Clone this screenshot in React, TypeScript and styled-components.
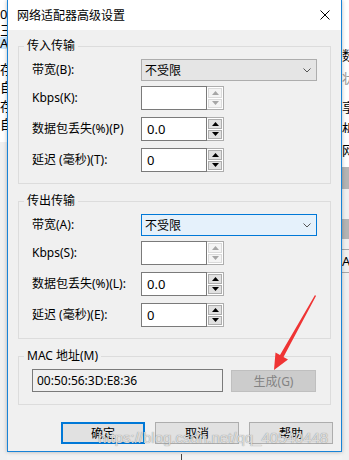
import React from 'react';
import styled, {createGlobalStyle} from 'styled-components';

const GlobalStyle = createGlobalStyle`
  html, body {
    margin: 0;
    padding: 0;
    background: #f0f0f0;
  }
  body {
    font-family: "Noto Sans", "Noto Sans CJK SC", sans-serif;
    font-size: 12px;
    color: #000;
  }
`;

const Screen = styled.div`
  display: flex;
  width: 349px;
  height: 460px;
  overflow: hidden;
`;

// strips of the window behind the dialog
const Backdrop = styled.div`
  width: 7px;
  flex: none;
  overflow: hidden;
  display: flex;
  flex-direction: column;
  background: #f0f0f0;
`;

const BackdropLine = styled.div<{$h: number; $bg?: string; $color?: string; $rule?: boolean}>`
  height: ${p => p.$h}px;
  flex: none;
  display: flex;
  align-items: center;
  background: ${p => p.$bg || 'transparent'};
  color: ${p => p.$color || '#000'};
  border-bottom: ${p => (p.$rule ? '1px solid #a8a8a8' : 'none')};
  font-size: 13px;
  line-height: 1;
  white-space: nowrap;
`;

const DialogColumn = styled.div`
  width: 335px;
  flex: none;
  display: flex;
  flex-direction: column;
`;

const Dialog = styled.div`
  position: relative;
  z-index: 1;
  height: 452px;
  flex: none;
  box-sizing: border-box;
  border: 1px solid #1883d7;
  border-top: none;
  background: #f0f0f0;
  display: flex;
  flex-direction: column;
  box-shadow: 0 0 4px rgba(0, 0, 0, 0.28);
`;

const TitleBar = styled.div`
  height: 30px;
  flex: none;
  background: #fff;
  display: flex;
  align-items: center;
  justify-content: space-between;
  padding: 0 11px 0 9px;
  font-size: 12px;
`;

const Body = styled.div`
  display: flex;
  flex-direction: column;
  gap: 9px;
  padding: 8px 10px 0 10px;
`;

const Group = styled.fieldset`
  margin: 0;
  padding: 0;
  min-width: 0;
  border: 1px solid #dcdcdc;
`;

const Legend = styled.legend`
  margin-left: 5px;
  padding: 0 3px;
  font-size: 12px;
  line-height: 16px;
`;

const GroupContent = styled.div<{$pb?: number}>`
  display: flex;
  flex-direction: column;
  gap: 7px;
  padding: 5px 13px ${p => p.$pb ?? 11}px 13px;
`;

const Row = styled.div<{$h: number; $tight?: boolean}>`
  display: grid;
  grid-template-columns: 109px auto;
  align-items: center;
  height: ${p => p.$h}px;
  margin-bottom: ${p => (p.$tight ? -2 : 0)}px;
`;

const Label = styled.div`
  white-space: nowrap;
  line-height: 16px;
`;

const Select = styled.div<{$focused?: boolean}>`
  width: 176px;
  height: 22px;
  box-sizing: border-box;
  border: 1px solid ${p => (p.$focused ? '#0078d7' : '#adadad')};
  background: ${p => (p.$focused ? '#e5f1fb' : '#e5e5e5')};
  display: flex;
  align-items: center;
  justify-content: space-between;
  padding: 0 5px 0 3px;
`;

const Spin = styled.div`
  display: flex;
  width: 83px;
  height: 24px;
`;

const SpinField = styled.div`
  width: 66px;
  box-sizing: border-box;
  border: 1px solid #7a7a7a;
  background: #fff;
  display: flex;
  align-items: center;
  padding-left: 5px;
  font-size: 13px;
`;

const SpinButtons = styled.div`
  width: 17px;
  box-sizing: border-box;
  border: 1px solid #adadad;
  border-left: none;
  background: #fff;
  display: flex;
  flex-direction: column;
  gap: 1px;
  padding: 1px;
`;

const SpinButton = styled.div<{$disabled?: boolean}>`
  flex: 1;
  box-sizing: border-box;
  border: 1px solid ${p => (p.$disabled ? '#dadada' : '#adadad')};
  background: ${p => (p.$disabled ? '#f4f4f4' : '#e1e1e1')};
  display: flex;
  align-items: center;
  justify-content: center;
`;

const MacRow = styled.div`
  display: flex;
  align-items: center;
  gap: 8px;
`;

const MacField = styled.div`
  width: 191px;
  height: 23px;
  box-sizing: border-box;
  border: 1px solid #7a7a7a;
  display: flex;
  align-items: center;
  padding-left: 4px;
  font-size: 12px;
`;

const Button = styled.div<{$primary?: boolean; $disabled?: boolean}>`
  width: ${p => (p.$disabled ? 85 : 84)}px;
  height: 22px;
  box-sizing: border-box;
  border: ${p => (p.$primary ? '2px solid #0078d7' : `1px solid ${p.$disabled ? '#bfbfbf' : '#adadad'}`)};
  background: ${p => (p.$disabled ? '#cccccc' : '#e1e1e1')};
  color: ${p => (p.$disabled ? '#838383' : '#000')};
  display: flex;
  align-items: center;
  justify-content: center;
  font-size: 12px;
`;

const Footer = styled.div`
  display: flex;
  justify-content: flex-end;
  gap: 10px;
  margin-top: 17px;
  padding-right: 8px;
`;

const Watermark = styled.div`
  position: absolute;
  left: 90px;
  top: 429px;
  font-family: "Liberation Sans", Arial, sans-serif;
  font-size: 15px;
  line-height: 18px;
  color: rgba(232, 232, 232, 0.9);
  text-shadow: 0 0 1px rgba(80, 80, 80, 0.75);
  white-space: nowrap;
  pointer-events: none;
`;

const Arrow = styled.svg`
  position: absolute;
  left: 261px;
  top: 292px;
`;

const BelowDialog = styled.div`
  flex: 1;
  background: #f2f2f2;
  padding: 2px 0 0 174px;
`;

const Tick = styled.div`
  width: 1px;
  height: 6px;
  background: #444;
`;

const Chevron = () => (
  <svg width="8" height="5" viewBox="0 0 8 5">
    <path d="M0.5 0.5 L4 4 L7.5 0.5" fill="none" stroke="#555" strokeWidth="1"/>
  </svg>
);

const SpinArrow = ({up, disabled}: {up?: boolean; disabled?: boolean}) => (
  <svg width="7" height="4" viewBox="0 0 7 4">
    <polygon points={up ? '0,4 3.5,0 7,4' : '0,0 7,0 3.5,4'} fill={disabled ? '#a6a6a6' : '#000'}/>
  </svg>
);

const SpinBox = ({value, disabled}: {value?: string; disabled?: boolean}) => (
  <Spin>
    <SpinField>{value}</SpinField>
    <SpinButtons>
      <SpinButton $disabled={disabled}><SpinArrow up disabled={disabled}/></SpinButton>
      <SpinButton $disabled={disabled}><SpinArrow disabled={disabled}/></SpinButton>
    </SpinButtons>
  </Spin>
);

type Transfer = {title: string; keys: string[]; focused?: boolean};

const transfers: Transfer[] = [
  {title: '传入传输', keys: ['B', 'K', 'P', 'T']},
  {title: '传出传输', keys: ['A', 'S', 'L', 'E'], focused: true},
];

const TransferGroup = ({title, keys, focused}: Transfer) => (
  <Group>
    <Legend>{title}</Legend>
    <GroupContent>
      <Row $h={22} $tight>
        <Label>带宽({keys[0]}):</Label>
        <Select $focused={focused}>不受限<Chevron/></Select>
      </Row>
      <Row $h={24}>
        <Label>Kbps({keys[1]}):</Label>
        <SpinBox disabled/>
      </Row>
      <Row $h={24}>
        <Label>数据包丢失(%)({keys[2]}){focused ? ':' : ''}</Label>
        <SpinBox value="0.0"/>
      </Row>
      <Row $h={24}>
        <Label>延迟 (毫秒)({keys[3]}):</Label>
        <SpinBox value="0"/>
      </Row>
    </GroupContent>
  </Group>
);

const App = () => (
  <>
    <GlobalStyle/>
    <Screen>
      <Backdrop>
        <BackdropLine $h={5} $bg="#fff"/>
        <BackdropLine $h={18} $bg="#fff">0</BackdropLine>
        <BackdropLine $h={14} $bg="#fff">三</BackdropLine>
        <BackdropLine $h={12} $bg="#cce8ff">A</BackdropLine>
        <BackdropLine $h={11} $bg="#fff"/>
        <BackdropLine $h={18} $bg="#fff">存</BackdropLine>
        <BackdropLine $h={19} $bg="#fff">自</BackdropLine>
        <BackdropLine $h={18} $bg="#fff">存</BackdropLine>
        <BackdropLine $h={19} $bg="#fff">自</BackdropLine>
        <BackdropLine $h={8} $bg="#fff"/>
      </Backdrop>

      <DialogColumn>
        <Dialog>
          <TitleBar>
            网络适配器高级设置
            <svg width="10" height="10" viewBox="0 0 10 10">
              <path d="M0.5 0.5 L9.5 9.5 M9.5 0.5 L0.5 9.5" stroke="#000" strokeWidth="1"/>
            </svg>
          </TitleBar>

          <Body>
            {transfers.map(t => <TransferGroup key={t.title} {...t}/>)}

            <Group>
              <Legend>MAC 地址(M)</Legend>
              <GroupContent $pb={12}>
                <MacRow>
                  <MacField>00:50:56:3D:E8:36</MacField>
                  <Button $disabled>生成(G)</Button>
                </MacRow>
              </GroupContent>
            </Group>
          </Body>

          <Footer>
            <Button $primary>确定</Button>
            <Button>取消</Button>
            <Button>帮助</Button>
          </Footer>

          <Arrow width="50" height="80" viewBox="0 0 50 80">
            <polygon points="46,3 47,4 14.5,65 19,67.5 5,78 6.5,60.5 11,63" fill="#ef3434"/>
          </Arrow>
          <Watermark>https://blog.csdn.net/qq_40540448</Watermark>
        </Dialog>
        <BelowDialog><Tick/></BelowDialog>
      </DialogColumn>

      <Backdrop>
        <BackdropLine $h={45} $bg="#fff"/>
        <BackdropLine $h={20} $bg="#fff">数</BackdropLine>
        <BackdropLine $h={26} $bg="#fff" $color="#9a9a9a">状</BackdropLine>
        <BackdropLine $h={32} $bg="#fff">享</BackdropLine>
        <BackdropLine $h={10} $bg="#fff">机</BackdropLine>
        <BackdropLine $h={34} $bg="#fff">网</BackdropLine>
        <BackdropLine $h={22} $bg="#b4b4b4"/>
        <BackdropLine $h={30}/>
        <BackdropLine $h={20} $bg="#b4b4b4"/>
        <BackdropLine $h={10} $rule/>
        <BackdropLine $h={22} $rule>A</BackdropLine>
      </Backdrop>
    </Screen>
  </>
);

export default App;
